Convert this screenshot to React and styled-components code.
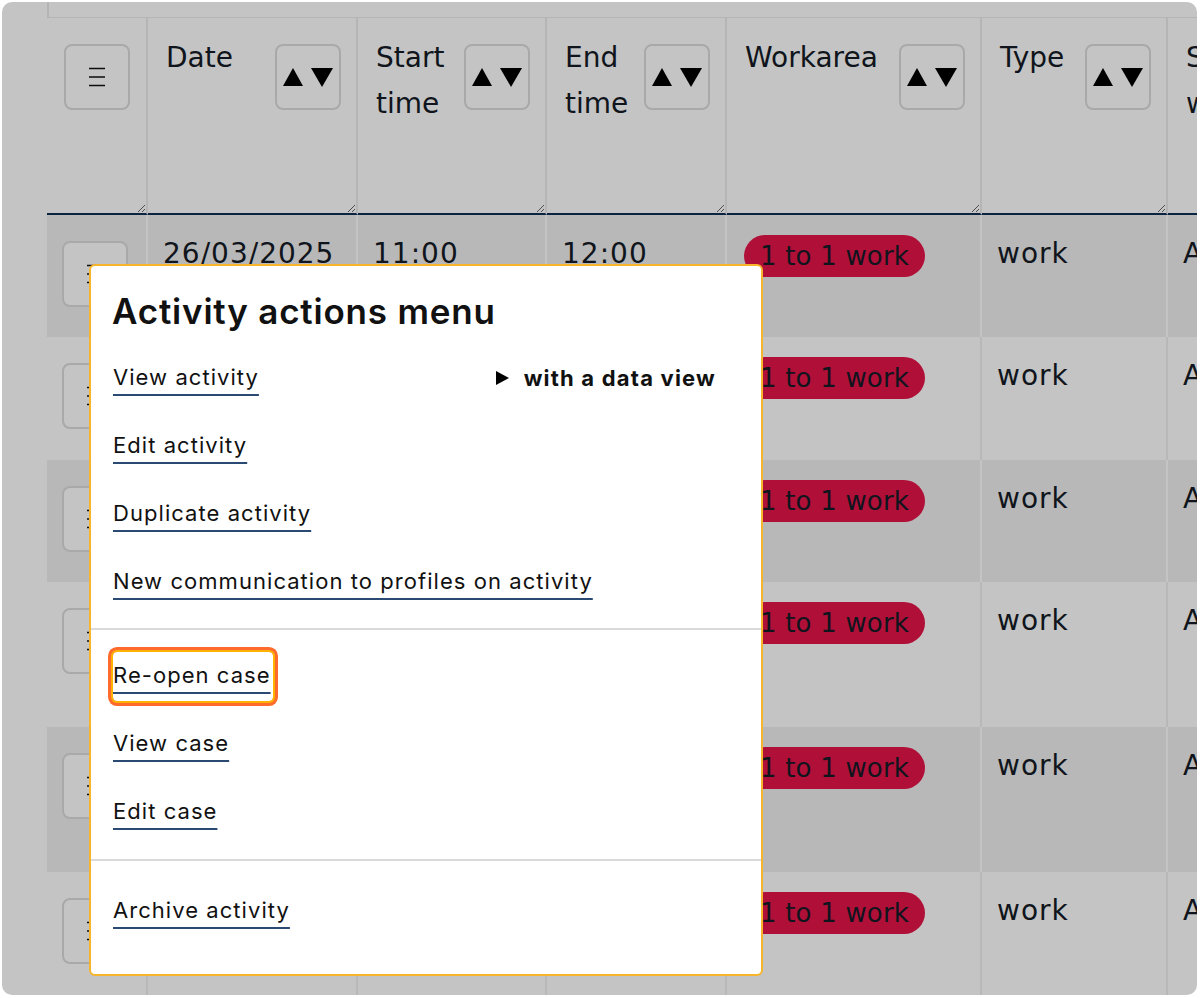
import React from 'react';
import styled, { createGlobalStyle, css } from 'styled-components';

const GlobalStyle = createGlobalStyle`
  html, body {
    margin: 0;
    padding: 0;
    background: #fff;
  }
  body {
    font-family: "DejaVu Sans", Verdana, sans-serif;
  }
`;

const Frame = styled.div`
  position: relative;
  margin: 2px 3px 3px 2px;
  height: 993px;
  border-radius: 10px;
  overflow: hidden;
  background: #fff;
`;

const TopStrip = styled.div`
  margin-left: 45px;
  height: 15px;
  border-left: 2px solid #ececec;
  border-bottom: 1px solid #ececec;
`;

const Table = styled.table`
  margin-left: 45px;
  border-collapse: separate;
  border-spacing: 0;
  table-layout: fixed;
  width: 1341px;
  color: #141a26;
`;

const Th = styled.th`
  padding: 0;
  text-align: left;
  font-weight: normal;
  vertical-align: top;
  border-right: 2px solid #ececec;
  border-bottom: 2px solid #0d2f57;
`;

const HeadInner = styled.div`
  box-sizing: border-box;
  height: 195px;
  padding: 17px 15px 0 ${p => (p.$first ? 17 : 18)}px;
  display: flex;
  justify-content: space-between;
  align-items: flex-start;
  gap: 10px;
  resize: horizontal;
  overflow: hidden;
  font-size: 28px;
  line-height: 46px;
`;

const IconButton = styled.button`
  flex: none;
  width: 66px;
  height: 66px;
  margin-top: ${p => (p.$inHead ? 9 : 10)}px;
  padding: 0;
  border: 2px solid #dcdcdc;
  border-radius: 8px;
  background: #fff;
  color: #111;
  display: flex;
  align-items: center;
  justify-content: center;
  gap: 8px;
`;

const Tr = styled.tr`
  height: ${p => p.$h}px;
`;

const Td = styled.td`
  vertical-align: top;
  padding: 16px 14px 0 ${p => (p.$first ? 15 : 15)}px;
  background: ${p => (p.$striped ? '#f0f0f0' : '#fff')};
  border-right: 2px solid ${p => (p.$striped ? '#fff' : '#f0f0f0')};
  font-size: 28px;
  line-height: 46px;
  letter-spacing: 1px;
  overflow: hidden;
`;

const Pill = styled.span`
  display: inline-block;
  margin: 4px 0 0 2px;
  height: 42px;
  padding: 0 16px;
  border-radius: 21px;
  background: #e6154a;
  font-size: 26px;
  line-height: 42px;
  letter-spacing: 0.2px;
  white-space: nowrap;
`;

const Backdrop = styled.div`
  position: absolute;
  inset: 0;
  background: rgba(0, 0, 0, 0.23);
  z-index: 1;
`;

const Dialog = styled.div`
  position: absolute;
  left: 87px;
  top: 262px;
  width: 674px;
  box-sizing: border-box;
  background: #fff;
  border: 2px solid #f7b52c;
  border-radius: 6px;
  font-family: Inter, "Noto Sans", sans-serif;
  color: #111;
  z-index: 2;
`;

const Title = styled.h2`
  margin: 0;
  padding: 25px 21px 0;
  font-size: 35px;
  line-height: 40px;
  font-weight: 600;
  letter-spacing: 0.8px;
`;

const Section = styled.div`
  padding: ${p => p.$top}px 0 ${p => p.$bottom}px;
  border-top: ${p => (p.$divided ? '2px solid #dadada' : 'none')};
`;

const Item = styled.div`
  display: flex;
  justify-content: space-between;
  align-items: center;
  padding: 10px 45px 11px 22px;
`;

const ActionLink = styled.a`
  display: inline-block;
  padding: 9px 2px 10px 0;
  font-size: 22px;
  line-height: 28px;
  letter-spacing: 1.05px;
  color: #111;
  text-decoration: underline;
  text-decoration-color: #2b4a73;
  text-decoration-thickness: 2px;
  text-underline-offset: 9px;
  border-radius: 4px;
  cursor: pointer;
  ${p =>
    p.$focused &&
    css`
      box-shadow: 0 0 0 2px #ffb300, 0 0 0 5px #ff6b2c;
      padding-bottom: 12px;
      margin-bottom: -2px;
    `}
`;

const DataView = styled.span`
  display: flex;
  align-items: center;
  gap: 15px;
  font-size: 22px;
  line-height: 28px;
  font-weight: 700;
  letter-spacing: 1.2px;
`;

const MenuIcon = () => (
  <svg width="16" height="20" viewBox="0 0 16 20">
    <path d="M0 1.5h16M0 10h16M0 18.5h16" stroke="#111" strokeWidth="1.6" />
  </svg>
);

const SortIcon = () => (
  <>
    <svg width="20" height="20" viewBox="0 0 20 20">
      <polygon points="10,1 20,19 0,19" fill="#000" />
    </svg>
    <svg width="22" height="20" viewBox="0 0 22 20">
      <polygon points="0,1 22,1 11,20" fill="#000" />
    </svg>
  </>
);

const columns = [
  { label: '', width: 101 },
  { label: 'Date', width: 210 },
  { label: 'Start time', width: 189 },
  { label: 'End time', width: 180 },
  { label: 'Workarea', width: 255 },
  { label: 'Type', width: 186 },
  { label: 'Support worker', width: 220 }
];

const rows = [
  { h: 122, date: '26/03/2025', start: '11:00', end: '12:00', who: 'Alex smith' },
  { h: 123, date: '26/03/2025', start: '13:00', end: '14:00', who: 'Alex smith' },
  { h: 122, date: '27/03/2025', start: '09:00', end: '10:00', who: 'Alex smith' },
  { h: 145, date: '27/03/2025', start: '11:00', end: '12:30', who: 'Alex smith' },
  { h: 145, date: '28/03/2025', start: '10:00', end: '11:00', who: 'Alex smith' },
  { h: 130, date: '28/03/2025', start: '14:00', end: '15:00', who: 'Alex smith' }
];

const sections = [
  {
    top: 13,
    bottom: 12,
    items: [
      { label: 'View activity', dataView: true },
      { label: 'Edit activity' },
      { label: 'Duplicate activity' },
      { label: 'New communication to profiles on activity' }
    ]
  },
  {
    top: 12,
    bottom: 13,
    items: [
      { label: 'Re-open case', focused: true },
      { label: 'View case' },
      { label: 'Edit case' }
    ]
  },
  {
    top: 16,
    bottom: 29,
    items: [{ label: 'Archive activity' }]
  }
];

export default function App() {
  return (
    <>
      <GlobalStyle />
      <Frame>
        <TopStrip />
        <Table>
          <colgroup>
            {columns.map((c, i) => (
              <col key={i} style={{ width: c.width }} />
            ))}
          </colgroup>
          <thead>
            <tr>
              {columns.map((c, i) => (
                <Th key={i}>
                  <HeadInner $first={i === 0}>
                    {i === 0 ? (
                      <IconButton $inHead aria-label="Columns">
                        <MenuIcon />
                      </IconButton>
                    ) : (
                      <>
                        <span>{c.label}</span>
                        <IconButton $inHead aria-label={`Sort by ${c.label}`}>
                          <SortIcon />
                        </IconButton>
                      </>
                    )}
                  </HeadInner>
                </Th>
              ))}
            </tr>
          </thead>
          <tbody>
            {rows.map((r, i) => {
              const striped = i % 2 === 0;
              return (
                <Tr key={i} $h={r.h}>
                  <Td $first $striped={striped}>
                    <IconButton aria-label="Activity actions">
                      <MenuIcon />
                    </IconButton>
                  </Td>
                  <Td $striped={striped}>{r.date}</Td>
                  <Td $striped={striped}>{r.start}</Td>
                  <Td $striped={striped}>{r.end}</Td>
                  <Td $striped={striped}>
                    <Pill>1 to 1 work</Pill>
                  </Td>
                  <Td $striped={striped}>work</Td>
                  <Td $striped={striped}>{r.who}</Td>
                </Tr>
              );
            })}
          </tbody>
        </Table>
        <Backdrop />
        <Dialog role="dialog" aria-label="Activity actions menu">
          <Title>Activity actions menu</Title>
          {sections.map((s, si) => (
            <Section key={si} $top={s.top} $bottom={s.bottom} $divided={si > 0}>
              {s.items.map(item => (
                <Item key={item.label}>
                  <ActionLink $focused={item.focused}>{item.label}</ActionLink>
                  {item.dataView && (
                    <DataView>
                      <svg width="13" height="14" viewBox="0 0 13 14">
                        <polygon points="0,0 13,7 0,14" fill="#000" />
                      </svg>
                      with a data view
                    </DataView>
                  )}
                </Item>
              ))}
            </Section>
          ))}
        </Dialog>
      </Frame>
    </>
  );
}
